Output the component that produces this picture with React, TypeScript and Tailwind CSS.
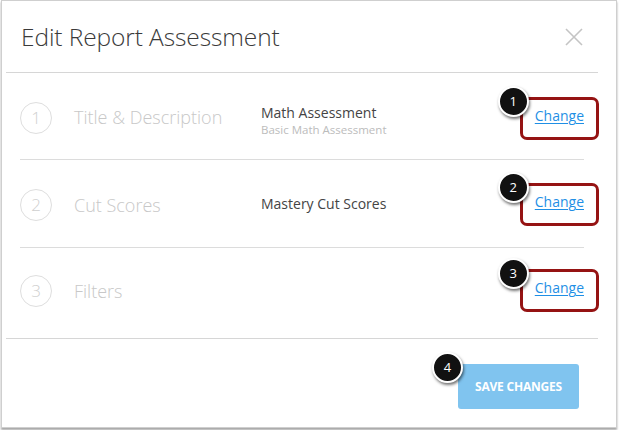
import React from 'react';

type Step = {
  num: number;
  label: string;
  value?: string;
  sub?: string;
  h: string;
};

const steps: Step[] = [
  { num: 1, label: 'Title & Description', value: 'Math Assessment', sub: 'Basic Math Assessment', h: 'h-[87px]' },
  { num: 2, label: 'Cut Scores', value: 'Mastery Cut Scores', h: 'h-[88px]' },
  { num: 3, label: 'Filters', h: 'h-[83px]' },
];

const Badge: React.FC<{ n: number; className: string }> = ({ n, className }) => (
  <div
    className={`absolute w-[31px] h-[31px] rounded-full bg-[#111] border-2 border-white shadow-[1px_2px_3px_rgba(0,0,0,0.55)] flex items-center justify-center text-white text-[13px] leading-none ${className}`}
  >
    {n}
  </div>
);

const App: React.FC = () => {
  return (
    <div className="w-[619px] h-[430px] bg-white font-['Open_Sans',sans-serif] overflow-hidden">
      <div className="ml-[1px] w-[616px] h-[428px] bg-white border border-[#cfcfcf] shadow-[0_2px_2px_rgba(0,0,0,0.35)] flex flex-col">
        {/* Header */}
        <div className="h-[71px] flex items-center justify-between pl-[19px] pr-[34px]">
          <h1 className="text-[24.5px] font-light text-[#3a3a3a] tracking-[-0.1px] pt-[1px]">Edit Report Assessment</h1>
          <svg width="18" height="18" viewBox="0 0 18 18" className="mt-[1px] -mr-[1px]">
            <path d="M1 1 L17 17 M17 1 L1 17" stroke="#c4c4c4" strokeWidth="1.6" />
          </svg>
        </div>
        <div className="ml-[4px] mr-[18px] border-t border-[#d6d6d6]" />

        {/* Steps */}
        <div className="ml-[18px] mr-[32px]">
          {steps.map((s, i) => (
            <div
              key={s.num}
              className={`${s.h} flex items-center ${i < steps.length - 1 ? 'border-b border-[#dcdcdc]' : ''}`}
            >
              <div className="w-[32px] h-[32px] rounded-full border border-[#dedede] flex items-center justify-center text-[17px] font-light text-[#cfcfcf] mt-[3px]">
                {s.num}
              </div>
              <div className="ml-[22px] w-[187px] text-[18px] font-light text-[#c8c8c8] mt-[3px]">{s.label}</div>
              <div className={`flex-1 flex flex-col ${s.sub ? 'mt-[8px]' : ''}`}>
                {s.value && <span className="text-[14px] text-[#444] leading-[18px]">{s.value}</span>}
                {s.sub && <span className="text-[11.5px] text-[#bcbcbc] leading-[15px]">{s.sub}</span>}
              </div>
              <div className={`relative ${s.sub ? 'mb-[3px]' : 'mb-[6px]'}`}>
                <a className="text-[14px] text-[#1f8fe5] underline underline-offset-2 decoration-1">Change</a>
                <div className="absolute -left-[15px] -right-[15px] -top-[6px] -bottom-[13px] border-[3px] border-[#951313] rounded-[7px]" />
                <Badge n={s.num} className="-left-[37px] -top-[17px]" />
              </div>
            </div>
          ))}
        </div>

        <div className="ml-[4px] mr-[18px] mt-[7px] border-t border-[#d6d6d6]" />

        {/* Footer */}
        <div className="flex justify-end pr-[37px] pt-[25px]">
          <div className="relative">
            <button className="w-[121px] h-[45px] rounded-[3px] bg-[#80c4ef] text-white text-[12px] font-bold tracking-[-0.2px]">
              SAVE CHANGES
            </button>
            <Badge n={4} className="-left-[26px] -top-[12px]" />
          </div>
        </div>
      </div>
    </div>
  );
};

export default App;
